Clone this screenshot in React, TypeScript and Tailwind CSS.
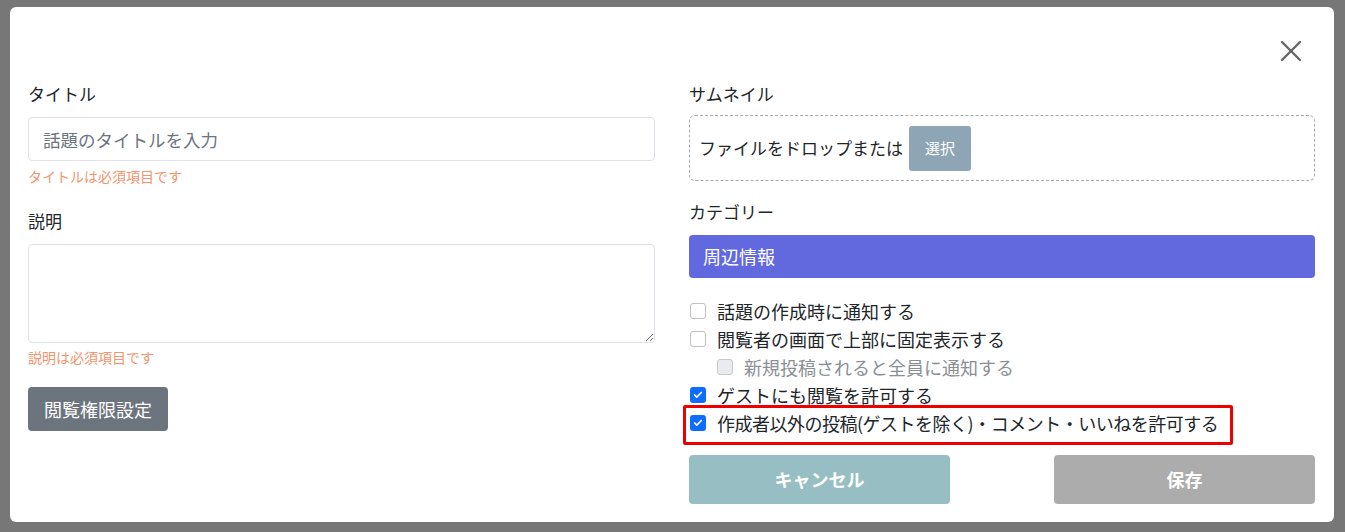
import { Check, X } from 'lucide-react'

type Opt = { label: string; checked?: boolean; disabled?: boolean; indent?: boolean; highlight?: boolean }

const options: Opt[] = [
  { label: '話題の作成時に通知する' },
  { label: '閲覧者の画面で上部に固定表示する' },
  { label: '新規投稿されると全員に通知する', disabled: true, indent: true },
  { label: 'ゲストにも閲覧を許可する', checked: true },
  { label: '作成者以外の投稿(ゲストを除く)・コメント・いいねを許可する', checked: true, highlight: true },
]

function Box({ checked, disabled }: { checked?: boolean; disabled?: boolean }) {
  if (checked) {
    return (
      <span className="w-[16px] h-[16px] rounded-[3px] bg-[#0d6efd] flex items-center justify-center shrink-0">
        <Check className="w-[10px] h-[10px] text-white" strokeWidth={4} />
      </span>
    )
  }
  return (
    <span
      className={
        disabled
          ? 'w-[16px] h-[16px] rounded-[3px] border border-[#c4c8cc] bg-[#e9ecef] shrink-0'
          : 'w-[16px] h-[16px] rounded-[3px] border border-[#bdc1c5] bg-white shrink-0'
      }
    />
  )
}

export default function App() {
  return (
    <div className="w-[1345px] h-[532px] bg-[#777777] pt-[7px] pl-[10px] font-['Noto_Sans_CJK_JP','Noto_Sans',sans-serif] text-[#212529]">
      <div className="w-[1324px] h-[515px] bg-white rounded-[6px]">
        {/* Header */}
        <div className="flex justify-end pt-[26px] pr-[25px]">
          <X className="w-[36px] h-[36px] text-[#666666]" strokeWidth={1.6} />
        </div>

        <div className="flex gap-[34px] px-[18px] pt-[13px]">
          {/* Left column */}
          <div className="w-[627px] flex flex-col">
            <label className="text-[17px] leading-[24px]">タイトル</label>
            <input
              placeholder="話題のタイトルを入力"
              className="mt-[11px] h-[44px] w-full border border-[#dee2e6] rounded-[4px] px-[14px] text-[17.5px] placeholder:text-[#6c757d] outline-none"
            />
            <p className="mt-[5px] text-[14px] leading-[20px] text-[#f5936c]">タイトルは必須項目です</p>
            <label className="mt-[23px] text-[17px] leading-[24px]">説明</label>
            <textarea className="mt-[11px] h-[99px] w-full border border-[#dee2e6] rounded-[4px] px-[14px] py-[8px] text-[17px] outline-none" />
            <p className="mt-[4px] text-[14px] leading-[20px] text-[#f5936c]">説明は必須項目です</p>
            <div className="mt-[20px]">
              <button className="h-[44px] px-[16px] bg-[#6c757d] text-white text-[18px] rounded-[4px]">
                閲覧権限設定
              </button>
            </div>
          </div>

          {/* Right column */}
          <div className="w-[626px] flex flex-col">
            <label className="text-[17px] leading-[24px]">サムネイル</label>
            <div className="mt-[9px] h-[66px] border border-dashed border-[#a8a8a8] rounded-[6px] flex items-center pl-[9px]">
              <span className="text-[17px]">ファイルをドロップまたは</span>
              <button className="ml-[6px] h-[45px] w-[62px] bg-[#8ea5b5] text-white text-[15px] rounded-[3px]">
                選択
              </button>
            </div>
            <label className="mt-[19px] text-[17px] leading-[24px]">カテゴリー</label>
            <div className="mt-[11px] h-[43px] bg-[#6268dd] rounded-[4px] flex items-center px-[14px] text-white text-[18px]">
              周辺情報
            </div>

            <div className="mt-[19px] flex flex-col">
              {options.map((o) => (
                <div
                  key={o.label}
                  className={
                    'relative flex items-center gap-[11px] h-[28px] text-[18px] ' +
                    (o.indent ? 'pl-[28px] ' : 'pl-[1px] ') +
                    (o.disabled ? 'text-[#8a8f94] ' : '') +
                    (o.highlight ? 'tracking-[-0.5px]' : '')
                  }
                >
                  <Box checked={o.checked} disabled={o.disabled} />
                  <span className="whitespace-nowrap">{o.label}</span>
                  {o.highlight && (
                    <span className="absolute -left-[6px] -top-[4px] w-[550px] h-[40px] border-[3px] border-[#ee0000] rounded-[2px]" />
                  )}
                </div>
              ))}
            </div>

            <div className="mt-[18px] flex justify-between">
              <button className="w-[261px] h-[49px] bg-[#96bec3] text-white text-[18px] font-bold rounded-[4px]">
                キャンセル
              </button>
              <button className="w-[261px] h-[49px] bg-[#acacac] text-white text-[18px] font-bold rounded-[4px]">
                保存
              </button>
            </div>
          </div>
        </div>
      </div>
    </div>
  )
}
